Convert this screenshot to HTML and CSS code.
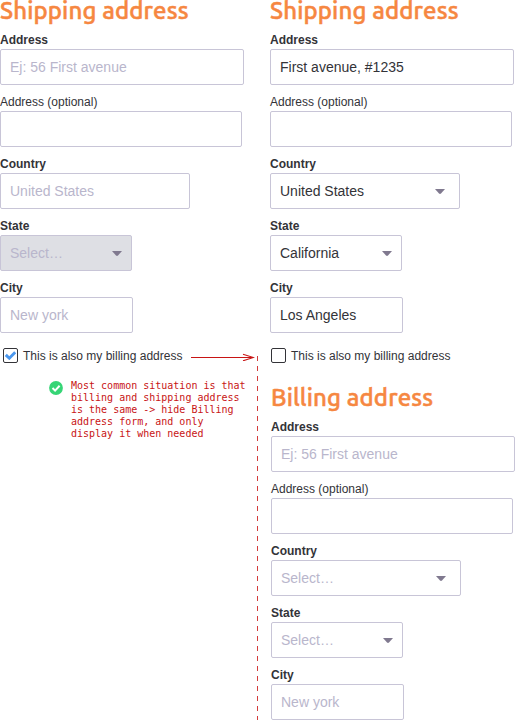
FILE: index.html
```
<!DOCTYPE html>
<html lang="en">
<head>
<meta charset="utf-8">
<title>Shipping address</title>
<link rel="stylesheet" href="styles.css">
</head>
<body>
<main class="page">
  <section class="column">
    <h2 class="title">Shipping address</h2>
    <div class="label">Address</div>
    <div class="field w-address placeholder">Ej: 56 First avenue</div>
    <div class="label optional">Address (optional)</div>
    <div class="field w-optional"></div>
    <div class="label">Country</div>
    <div class="field w-country placeholder">United States</div>
    <div class="label">State</div>
    <div class="field w-state placeholder disabled">Select…<svg class="caret" viewBox="0 0 10 5"><path d="M0 0h10L6 4.5Q5 5.4 4 4.5Z"/></svg></div>
    <div class="label">City</div>
    <div class="field w-city placeholder">New york</div>
    <div class="check-row">
      <span class="checkbox"><svg class="tick" viewBox="0 0 11 9"><path d="M.8 3.9L4.3 7.2L10.2 1.3"/></svg></span>
      <span>This is also my billing address</span>
      <svg class="arrow" viewBox="0 0 64 8"><path d="M0 4.5H62M52 1.2L62.5 4.5L52 7.8"/></svg>
    </div>
    <div class="note">
      <svg class="ok" viewBox="0 0 14 14"><circle cx="7" cy="7" r="6.9"/><path d="M3.5 7L6.1 9.6L10.6 4.8"/></svg>
      <p class="note-text">Most common situation is that<br>billing and shipping address<br>is the same -&gt; hide Billing<br>address form, and only<br>display it when needed</p>
    </div>
  </section>
  <div class="divider"></div>
  <div class="column">
    <section>
      <h2 class="title">Shipping address</h2>
      <div class="label">Address</div>
      <div class="field w-address">First avenue, #1235</div>
      <div class="label optional">Address (optional)</div>
      <div class="field w-optional"></div>
      <div class="label">Country</div>
      <div class="field w-country">United States<svg class="caret" viewBox="0 0 10 5"><path d="M0 0h10L6 4.5Q5 5.4 4 4.5Z"/></svg></div>
      <div class="label">State</div>
      <div class="field w-state">California<svg class="caret" viewBox="0 0 10 5"><path d="M0 0h10L6 4.5Q5 5.4 4 4.5Z"/></svg></div>
      <div class="label">City</div>
      <div class="field w-city">Los Angeles</div>
      <div class="check-row unchecked">
        <span class="checkbox"></span>
        <span>This is also my billing address</span>
      </div>
    </section>
    <section class="billing">
      <h2 class="title">Billing address</h2>
      <div class="label">Address</div>
      <div class="field w-address placeholder">Ej: 56 First avenue</div>
      <div class="label optional">Address (optional)</div>
      <div class="field w-optional"></div>
      <div class="label">Country</div>
      <div class="field w-country placeholder">Select…<svg class="caret" viewBox="0 0 10 5"><path d="M0 0h10L6 4.5Q5 5.4 4 4.5Z"/></svg></div>
      <div class="label">State</div>
      <div class="field w-state placeholder">Select…<svg class="caret" viewBox="0 0 10 5"><path d="M0 0h10L6 4.5Q5 5.4 4 4.5Z"/></svg></div>
      <div class="label">City</div>
      <div class="field w-city placeholder">New york</div>
    </section>
  </div>
</main>
</body>
</html>
```
FILE: styles.css
```
* { box-sizing: border-box; }
body {
  margin: 0;
  background: #fff;
  color: #333338;
  font-family: "Liberation Sans", Arial, sans-serif;
  font-size: 12px;
}
.page {
  display: grid;
  grid-template-columns: 257px 13px 245px;
  height: 720px;
}
.title {
  margin: 0;
  height: 31px;
  line-height: 21px;
  font-family: Ubuntu, "Noto Sans", sans-serif;
  font-size: 24px;
  font-weight: 500;
  letter-spacing: 0.13px;
  color: #f68741;
  -webkit-text-stroke: 0.5px #f68741;
  white-space: nowrap;
}
.label {
  height: 26px;
  padding-top: 10px;
  line-height: 14px;
  font-weight: 700;
}
.title + .label { height: 18px; padding-top: 2px; }
.optional { font-weight: 400; }
.field {
  display: flex;
  align-items: center;
  justify-content: space-between;
  height: 36px;
  padding: 0 9px;
  border: 1px solid #c8c5d7;
  border-radius: 2px;
  font-size: 14px;
}
.placeholder { color: #b9b6cc; }
.disabled { background: #dedfe4; }
.w-address { width: 244px; }
.w-optional { width: 242px; }
.w-country { width: 190px; padding-right: 14px; }
.w-state { width: 132px; }
.w-city { width: 133px; }
.caret { width: 10px; height: 5px; fill: #80798f; }
.check-row {
  display: flex;
  align-items: center;
  height: 16px;
  margin: 15px 0 0 3px;
  white-space: nowrap;
}
.checkbox {
  display: flex;
  align-items: center;
  justify-content: center;
  width: 15px;
  height: 15px;
  margin: 0 5px 1px 0;
  border: 1px solid #333338;
  border-radius: 2px;
}
.unchecked { margin-left: 1px; }
.tick { width: 11px; height: 9px; fill: none; stroke: #4a97ee; stroke-width: 2.9; }
.arrow {
  width: 64px;
  height: 8px;
  margin: 2px 0 0 9px;
  fill: none;
  stroke: #c81414;
  stroke-width: 1.1;
}
.note { display: flex; gap: 8px; margin: 16px 0 0 49px; }
.ok { width: 14px; height: 14px; margin-top: 1px; fill: #36d576; }
.ok path { fill: none; stroke: #fff; stroke-width: 2; }
.note-text {
  margin: 0;
  font: 10px/12px "DejaVu Sans Mono", monospace;
  color: #c81414;
  white-space: nowrap;
}
.divider {
  width: 1px;
  margin-top: 356px;
  background: repeating-linear-gradient(#d23c3c 0 5px, transparent 5px 10px);
}
.billing { margin: 23px 0 0 1px; }
```
